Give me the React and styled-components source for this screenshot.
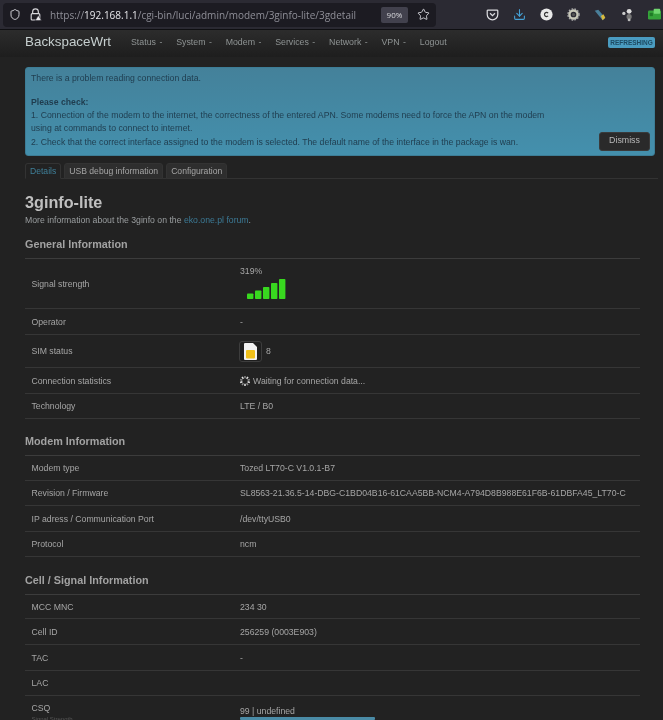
import React from "react";
import styled, { createGlobalStyle } from "styled-components";
import { Shield, Star, Download } from "lucide-react";

const Global = createGlobalStyle`
  html, body { margin: 0; padding: 0; background: #222222; }
  body { font-family: "Liberation Sans", Arial, sans-serif; font-size: 9px; color: #a9a9a9; overflow: hidden; }
  * { box-sizing: border-box; }
`;
const Page = styled.div`width: 663px; height: 720px; overflow: hidden; background: #222222; display: flex; flex-direction: column; filter: blur(0.3px);`;
const Chrome = styled.div`height: 30px; flex: none; background: #2b2a33; border-bottom: 1px solid #0f0f12; display: flex; align-items: center; padding-left: 3px;`;
const UrlBar = styled.div`width: 433px; height: 24px; border-radius: 4px; background: #1c1b22; display: flex; align-items: center; padding-left: 6px; flex: none;`;
const IconSlot = styled.span`width: ${p => p.$w || 14}px; display: inline-flex; align-items: center; justify-content: center; flex: none; color: #e0e0e6;`;
const Url = styled.div`font-family: "Open Sans", sans-serif; font-size: 10px; color: #8f8f98; width: 331px; flex: none; white-space: nowrap; overflow: hidden; b { color: #e6e6ea; font-weight: 500; }`;
const Zoom = styled.div`width: 27px; height: 16px; flex: none; background: #42414d; border-radius: 2px; color: #d8d8dc; font-family: "Open Sans", sans-serif; font-size: 8px; display: flex; align-items: center; justify-content: center;`;
const Tools = styled.div`display: flex; align-items: center; gap: 13px; padding-left: 49px;`;

const Nav = styled.div`height: 27px; flex: none; background: linear-gradient(#2c2c2c, #1e1e1e); display: flex; align-items: center; padding: 0 0 4px 25px; position: relative;`;
const Brand = styled.div`font-size: 13.4px; color: #c6cfcf; width: 106px;`;
const Menu = styled.div`display: flex; gap: 13.8px; font-size: 8.8px; color: #8f9494;`;
const MenuItem = styled.span`white-space: nowrap; &::after { content: ${p => p.$plain ? '""' : '" -"'}; margin-left: ${p => p.$plain ? 0 : 1}px; }`;
const Badge = styled.span`position: absolute; left: 608px; top: 7px; width: 47px; height: 11px; border-radius: 2px; background: #4a9cc0; color: #1d4a62; font-size: 6.5px; font-weight: 700; display: flex; align-items: center; justify-content: center;`;

const Main = styled.div`padding: 10px 5px 0 25px; flex: 1; min-height: 0;`;
const Alert = styled.div`position: relative; width: 630px; height: 89px; background: linear-gradient(#44819a, #4490ad); border: 1px solid #3d7d96; border-radius: 3px; padding: 4px 5px; color: #1f3c4e; font-size: 8.7px; line-height: 13px; white-space: nowrap;`;
const AlertGap = styled.div`height: ${p => p.$h}px;`;
const AlertLast = styled.div`margin-top: 1px;`;
const Dismiss = styled.button`position: absolute; right: 4px; bottom: 4px; width: 51px; height: 19px; border: 1px solid #3a3a3a; border-radius: 3px; background: #2a2a2a; color: #b8b8b8; font: 8.8px "Liberation Sans", sans-serif; padding: 0 0 3px;`;
const Tabs = styled.div`display: flex; gap: 3px; height: 16px; margin-top: 7px; border-bottom: 1px solid #333; width: 633px;`;
const Tab = styled.div`height: 16px; padding: 0 4px; display: flex; align-items: center; font-size: 8.6px; border-radius: 3px 3px 0 0; border: 1px solid #333; white-space: nowrap; background: ${p => p.$on ? "#222" : "#2e2e2e"}; color: ${p => p.$on ? "#3f7f98" : "#a5a5a5"}; ${p => p.$on ? "border-bottom-color:#222;" : ""}`;
const Title = styled.h1`margin: 11px 0 0; font-size: 16.2px; line-height: 24px; font-weight: 700; color: #c0c0c0;`;
const Sub = styled.div`font-size: 8.7px; line-height: 12px; color: #9a9ea0; a { color: #3c7a96; text-decoration: none; }`;
const Section = styled.h2`margin: ${p => p.$mt}px 0 0; height: 14px; font-size: 10.8px; line-height: 14px; font-weight: 700; color: #a2a2a2;`;
const Table = styled.div`width: 615px; margin-top: 7px; border-top: 1px solid #3c3c3c;`;
const Row = styled.div`display: flex; height: ${p => p.$h}px; flex: none; align-items: center; border-bottom: 1px solid #363636; font-size: 8.7px; color: #a6a6a6;`;
const Label = styled.div`width: 215px; padding-left: 6.5px; flex: none; white-space: nowrap;`;
const Value = styled.div`flex: 1; white-space: nowrap; display: flex; align-items: center; min-width: 0;`;
const SignalCell = styled.div`display: flex; flex-direction: column; align-items: flex-start; margin-top: -3px;`;
const Bars = styled.svg`width: 40px; height: 21px; margin: 2px 0 0 7px; display: block;`;
const SimBox = styled.span`width: 23px; height: 21px; border: 1px solid #3d3d3d; border-radius: 3px; display: inline-flex; align-items: center; justify-content: center; margin: 0 4px 0 -1px; background: #1f1f1f;`;
const Spin = styled.svg`width: 12px; height: 12px; margin: 0 2px 0 -1px;`;
const Last = styled.div`display: flex; flex-direction: column; align-items: flex-start; width: 100%;`;
const LastBar = styled.div`width: 135px; height: 3px; background: #4a8ba6; border-radius: 1px; margin-top: 1px;`;
const Tiny = styled.div`font-size: 6px; color: #555; line-height: 6px; margin-top: 3px;`;

const Pocket = () => (<svg width="13" height="13" viewBox="0 0 16 16" fill="none" stroke="#dcdce0" strokeWidth="1.5"><path d="M2.5 2.5h11a1 1 0 0 1 1 1v4.5a6.5 6.5 0 0 1-13 0V3.5a1 1 0 0 1 1-1z"/><path d="M5 6.5l3 3 3-3"/></svg>);
const Circle = () => (<svg width="13" height="13" viewBox="0 0 16 16"><circle cx="8" cy="8" r="7.5" fill="#e8e8e8"/><path d="M10 6.2a2.6 2.6 0 1 0 0 3.6" fill="none" stroke="#333" strokeWidth="1.4"/></svg>);
const Gear = () => (<svg width="13" height="13" viewBox="0 0 16 16"><circle cx="8" cy="8" r="5" fill="none" stroke="#c8c8b8" strokeWidth="3" /><circle cx="8" cy="8" r="6.8" fill="none" stroke="#aaa" strokeWidth="1.8" strokeDasharray="2 1.6"/><circle cx="8" cy="8" r="2" fill="#555"/></svg>);
const Pen = () => (<svg width="14" height="14" viewBox="0 0 16 16"><path d="M2 3l4-1 8 9-3 3z" fill="#4a7f9a"/><path d="M9 9l3-2 2 4-3 3z" fill="#d8b93c"/></svg>);
const Nodes = () => (<svg width="13" height="14" viewBox="0 0 16 16"><circle cx="10" cy="3.5" r="3" fill="#ddd"/><circle cx="3.5" cy="6" r="2" fill="#ccc"/><circle cx="10" cy="10" r="3.2" fill="#777"/><circle cx="10" cy="14" r="1.8" fill="#bbb"/></svg>);
const Green = () => (<svg width="13" height="13" viewBox="0 0 16 16"><rect x="0" y="3" width="16" height="11" rx="1.5" fill="#35a33a"/><rect x="7" y="1" width="8" height="6" rx="1" fill="#6fd66f"/><rect x="2" y="6" width="4" height="4" fill="#1f7a26"/></svg>);

const Lock = () => (
  <svg width="13" height="13" viewBox="0 0 16 16" fill="none">
    <path d="M4.5 7V4.5a3.5 3.5 0 0 1 7 0V7" stroke="#d8d8dc" strokeWidth="1.4"/>
    <rect x="2.7" y="7" width="10.6" height="7.8" rx="1.2" stroke="#d8d8dc" strokeWidth="1.4"/>
    <path d="M11.5 9l4 6.5h-8z" fill="#e8e8ec" stroke="#1c1b22" strokeWidth=".8"/>
  </svg>
);
const Sim = () => (
  <svg width="13" height="17" viewBox="0 0 13 17">
    <path d="M1 0h8l4 4v12a1 1 0 0 1-1 1H1a1 1 0 0 1-1-1V1a1 1 0 0 1 1-1z" fill="#f2f2f2"/>
    <rect x="2" y="7" width="9" height="8.5" rx="1" fill="#f0c01a"/>
  </svg>
);
const Spinner = () => (
  <Spin viewBox="0 0 16 16">
    {[...Array(10)].map((_, i) => (
      <line key={i} x1="8" y1="1.2" x2="8" y2="4.4" stroke={i % 2 ? "#e8e8e8" : "#8a8a8a"} strokeWidth="2" transform={`rotate(${i * 36} 8 8)`} />
    ))}
  </Spin>
);
const SignalBars = () => (
  <Bars viewBox="0 0 40 21">
    {[[0, 5.5], [8, 8.5], [16, 12], [24, 16], [32, 20]].map(([x, h]) => (
      <rect key={x} x={x} y={21 - h} width="6.4" height={h} rx="0.8" fill="#38d81f" />
    ))}
  </Bars>
);

export default function App() {
  return (
    <Page>
      <Global />
      <Chrome>
        <UrlBar>
          <IconSlot $w={12}><Shield size={13} strokeWidth={1.8} /></IconSlot>
          <IconSlot $w={29}><Lock /></IconSlot>
          <Url>https://<b>192.168.1.1</b>/cgi-bin/luci/admin/modem/3ginfo-lite/3gdetail</Url>
          <Zoom>90%</Zoom>
          <IconSlot $w={30}><Star size={13} strokeWidth={1.6} /></IconSlot>
        </UrlBar>
        <Tools>
          <IconSlot><Pocket /></IconSlot>
          <IconSlot><Download size={13} color="#45a1d6" strokeWidth={2} /></IconSlot>
          <IconSlot><Circle /></IconSlot>
          <IconSlot><Gear /></IconSlot>
          <IconSlot><Pen /></IconSlot>
          <IconSlot><Nodes /></IconSlot>
          <IconSlot><Green /></IconSlot>
        </Tools>
      </Chrome>
      <Nav>
        <Brand>BackspaceWrt</Brand>
        <Menu>
          <MenuItem>Status</MenuItem>
          <MenuItem>System</MenuItem>
          <MenuItem>Modem</MenuItem>
          <MenuItem>Services</MenuItem>
          <MenuItem>Network</MenuItem>
          <MenuItem>VPN</MenuItem>
          <MenuItem $plain>Logout</MenuItem>
        </Menu>
        <Badge>REFRESHING</Badge>
      </Nav>
      <Main>
        <Alert>
          <div>There is a problem reading connection data.</div>
          <AlertGap $h={11} />
          <div><b>Please check:</b></div>
          <div>1. Connection of the modem to the internet, the correctness of the entered APN. Some modems need to force the APN on the modem</div>
          <div>using at commands to connect to internet.</div>
          <AlertLast>2. Check that the correct interface assigned to the modem is selected. The default name of the interface in the package is wan.</AlertLast>
          <Dismiss>Dismiss</Dismiss>
        </Alert>
        <Tabs>
          <Tab $on>Details</Tab>
          <Tab>USB debug information</Tab>
          <Tab>Configuration</Tab>
        </Tabs>
        <Title>3ginfo-lite</Title>
        <Sub>More information about the 3ginfo on the <a href="#">eko.one.pl forum</a>.</Sub>
        <Section $mt={11}>General Information</Section>
        <Table>
          <Row $h={50}><Label>Signal strength</Label><Value><SignalCell>319%<SignalBars /></SignalCell></Value></Row>
          <Row $h={26}><Label>Operator</Label><Value>-</Value></Row>
          <Row $h={33}><Label>SIM status</Label><Value><SimBox><Sim /></SimBox>8</Value></Row>
          <Row $h={26}><Label>Connection statistics</Label><Value><Spinner />Waiting for connection data...</Value></Row>
          <Row $h={25}><Label>Technology</Label><Value>LTE / B0</Value></Row>
        </Table>
        <Section $mt={15}>Modem Information</Section>
        <Table>
          <Row $h={25}><Label>Modem type</Label><Value>Tozed LT70-C V1.0.1-B7</Value></Row>
          <Row $h={25}><Label>Revision / Firmware</Label><Value>SL8563-21.36.5-14-DBG-C1BD04B16-61CAA5BB-NCM4-A794D8B988E61F6B-61DBFA45_LT70-C</Value></Row>
          <Row $h={26}><Label>IP adress / Communication Port</Label><Value>/dev/ttyUSB0</Value></Row>
          <Row $h={25}><Label>Protocol</Label><Value>ncm</Value></Row>
        </Table>
        <Section $mt={16}>Cell / Signal Information</Section>
        <Table>
          <Row $h={24}><Label>MCC MNC</Label><Value>234 30</Value></Row>
          <Row $h={26}><Label>Cell ID</Label><Value>256259 (0003E903)</Value></Row>
          <Row $h={26}><Label>TAC</Label><Value>-</Value></Row>
          <Row $h={25}><Label>LAC</Label><Value></Value></Row>
          <Row $h={34}>
            <Label>CSQ<Tiny>Signal Strength</Tiny></Label>
            <Value><Last><div>99 | undefined</div><LastBar /></Last></Value>
          </Row>
        </Table>
      </Main>
    </Page>
  );
}
